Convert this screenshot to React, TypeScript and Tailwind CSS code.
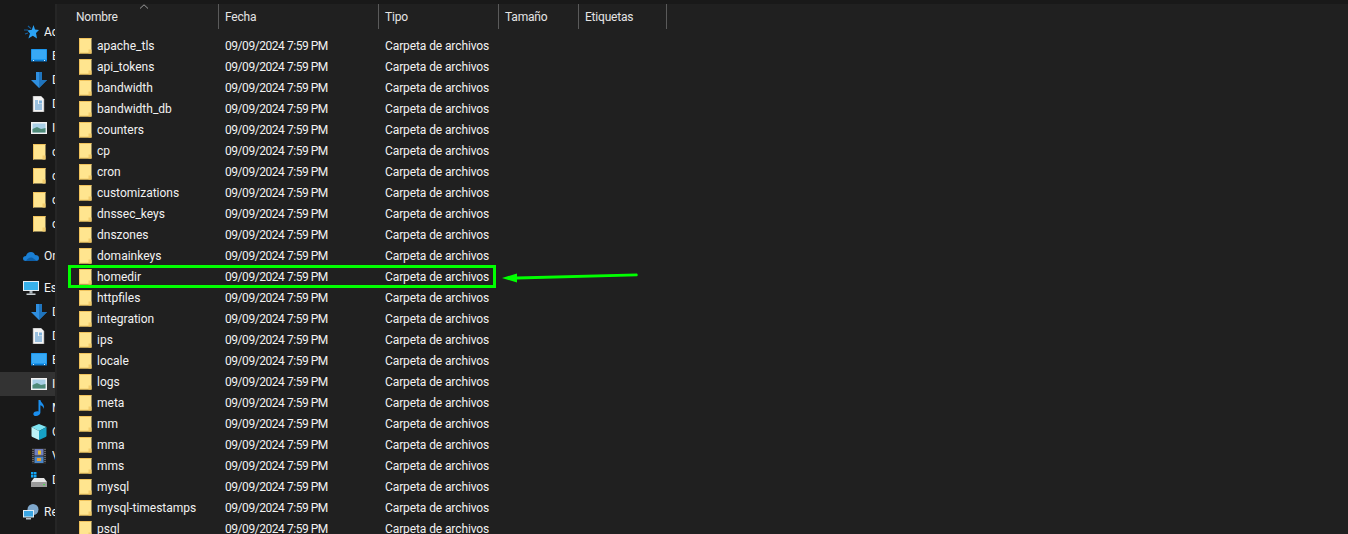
const folders = [
  "apache_tls", "api_tokens", "bandwidth", "bandwidth_db", "counters", "cp", "cron", "customizations",
  "dnssec_keys", "dnszones", "domainkeys", "homedir", "httpfiles", "integration", "ips", "locale",
  "logs", "meta", "mm", "mma", "mms", "mysql", "mysql-timestamps", "psql",
];

function FolderIcon() {
  return (
    <svg width="13" height="16" viewBox="0 0 13 16" className="shrink-0">
      <rect x="0" y="0" width="12.5" height="15.5" rx="0.5" fill="#ffe58f" />
      <path d="M0 15.5 L0 0.5 Q0 0 .5 0 L12 0 Q12.5 0 12.5 .5 L12.5 1 L1 1 L1 15.5 Z" fill="#f0c25c" />
      <path d="M9.5 15.5 V11.5 H12.5 V15.5 Z" fill="#f3cd6e" />
      <path d="M0 14.7 H12.5 V15.5 H0 Z" fill="#e6b850" />
    </svg>
  );
}

function StarIcon() {
  return (
    <svg width="16" height="16" viewBox="0 0 16 16">
      <path d="M10.5 1 L12 5.6 L16 6 L13 9 L14 14.5 L9.8 11.8 L5.4 14.5 L7 9.6 L4.4 6.6 L8.8 5.8 Z" fill="#2ba3f5" />
      <path d="M5 2 L8 4.6 M1 6 H5 M2 10 L5 9" stroke="#15609f" strokeWidth="1.2" />
    </svg>
  );
}

function DesktopIcon() {
  return (
    <svg width="16" height="16" viewBox="0 0 16 16">
      <rect x="0" y="1" width="16" height="12" rx="0.5" fill="#1c97ee" />
      <path d="M1 2 H15 V11 H1 Z" fill="#38a9f5" />
      <rect x="0" y="12" width="16" height="1.5" fill="#0c78cc" />
      <path d="M2 12.5 H3 M13 12.5 H14" stroke="#e8f6ff" strokeWidth="1" />
    </svg>
  );
}

function DownloadIcon() {
  return (
    <svg width="16" height="16" viewBox="0 0 16 16">
      <path d="M5 0 H11 V8 H16 L8 16 L0 8 H5 Z" fill="#2f8fe0" />
      <path d="M8 0 H11 V8 H16 L8 16 Z" fill="#1f74bd" />
    </svg>
  );
}

function DocIcon() {
  return (
    <svg width="16" height="16" viewBox="0 0 16 16">
      <path d="M2 0 H10 L13 3 V16 H2 Z" fill="#f4f4f4" stroke="#8a8a8a" strokeWidth="0.6" />
      <path d="M4 5 H7 M4 7 H7 M4 9 H11 M4 11 H11 M4 13 H11" stroke="#2a7fc4" strokeWidth="0.9" />
      <path d="M8 4.5 H11 V7.5 H8 Z" fill="#7fb3dc" />
    </svg>
  );
}

function PictureIcon() {
  return (
    <svg width="16" height="16" viewBox="0 0 16 16">
      <rect x="0" y="2" width="16" height="12" fill="#f2f2f2" />
      <rect x="1.5" y="3.5" width="13" height="9" fill="#a9cfe6" />
      <path d="M1.5 12.5 V9 L6 7 L10 9 L14.5 8 V12.5 Z" fill="#4f8a78" />
    </svg>
  );
}

function SmallFolderIcon() {
  return (
    <svg width="13" height="16" viewBox="0 0 13 16">
      <rect x="0" y="0" width="12.5" height="15.5" fill="#ffe58f" />
      <path d="M0 15.5 V0 H12.5 V1 H1 V15.5 Z" fill="#f0c25c" />
      <path d="M9.5 15.5 V11.5 H12.5 V15.5 Z" fill="#f3cd6e" />
    </svg>
  );
}

function CloudIcon() {
  return (
    <svg width="16" height="16" viewBox="0 0 16 16">
      <path d="M3 13 Q0 13 0 10.5 Q0 8 3 8 Q4 4 8 4 Q11 4 12 7 Q16 7 16 10 Q16 13 13 13 Z" fill="#1a7fd4" />
      <path d="M3 13 Q5 9 9 9.5 L14 13 Z" fill="#0e5fa8" />
    </svg>
  );
}

function ComputerIcon() {
  return (
    <svg width="16" height="16" viewBox="0 0 16 16">
      <rect x="0" y="1" width="16" height="10" fill="#e8eef2" />
      <rect x="1" y="2" width="14" height="8" fill="#37b0ea" />
      <rect x="6.5" y="11" width="3" height="2.5" fill="#a8b2b8" />
      <rect x="3.5" y="13.5" width="9" height="1.5" fill="#c8d0d4" />
    </svg>
  );
}

function MusicIcon() {
  return (
    <svg width="16" height="16" viewBox="0 0 16 16">
      <path d="M7.5 0 H9.4 C9.8 3 14 4 13 9 C12.4 6.6 11 5.6 9.4 5.2 V12.6 C9.4 14.8 7 16 5 16 C3 16 2 14.8 2.4 13.4 C2.9 11.8 5.4 10.8 7.5 11.4 Z" fill="#1b8fee" />
    </svg>
  );
}

function CubeIcon() {
  return (
    <svg width="16" height="16" viewBox="0 0 16 16">
      <path d="M8 0 L15.5 3 L8 7 L0.5 3 Z" fill="#7fe4f2" />
      <path d="M0.5 3 L8 7 V16 L1.4 13 Q.5 12.6 .5 11.8 Z" fill="#bdf3f8" />
      <path d="M15.5 3 L8 7 V16 L14.6 13 Q15.5 12.6 15.5 11.8 Z" fill="#17a2c6" />
    </svg>
  );
}

function VideoIcon() {
  return (
    <svg width="16" height="16" viewBox="0 0 16 16">
      <rect x="1" y="0" width="14" height="16" fill="#2a2a2a" />
      <rect x="3.5" y="1" width="9" height="6.5" fill="#6f7fc0" />
      <rect x="3.5" y="8.5" width="9" height="6.5" fill="#4a86c8" />
      <rect x="7" y="2.5" width="3" height="4" fill="#e8c030" />
      <rect x="6" y="10" width="4" height="3" fill="#e8a030" />
      <path d="M2 1 V15 M14 1 V15" stroke="#9a9a9a" strokeWidth="1" strokeDasharray="1 1" />
    </svg>
  );
}

function DriveIcon() {
  return (
    <svg width="16" height="16" viewBox="0 0 16 16">
      <path d="M0 0 H2.5 V2.5 H0 Z M3 0 H5.5 V2.5 H3 Z M0 3 H2.5 V5.5 H0 Z M3 3 H5.5 V5.5 H3 Z" fill="#12a5f4" />
      <path d="M3 6 H13 L16 10 H0 Z" fill="#e6e6e6" />
      <rect x="0" y="10" width="16" height="5" fill="#9a9a9a" />
      <rect x="12" y="12" width="2" height="1.2" fill="#4fd04f" />
    </svg>
  );
}

function NetworkIcon() {
  return (
    <svg width="16" height="16" viewBox="0 0 16 16">
      <circle cx="10" cy="5.5" r="5.5" fill="#7fa8cc" />
      <rect x="0" y="6" width="11" height="7.5" fill="#e0ecf4" />
      <rect x="1" y="7" width="9" height="5.5" fill="#3ba6e4" />
      <rect x="3" y="14" width="5" height="1.5" fill="#b8c4cc" />
    </svg>
  );
}

function NavRow({ icon, label, sub, selected }: { icon: React.ReactNode; label: string; sub?: boolean; selected?: boolean }) {
  return (
    <div className={`flex h-6 items-center gap-[5px] whitespace-nowrap ${sub ? "pl-[31px]" : "pl-[23px]"} ${selected ? "bg-[#333333]" : ""}`}>
      <span className="flex w-4 shrink-0 justify-center">{icon}</span>
      <span className="min-w-0 overflow-hidden">{label}</span>
    </div>
  );
}

function HeaderCell({ label, width }: { label: string; width: string }) {
  return (
    <div className={`flex h-[25px] shrink-0 items-center border-r border-[#5a5a5a] pl-[6px] tracking-[-0.2px] ${width}`}>
      {label}
    </div>
  );
}

export default function App() {
  return (
    <div className="relative flex h-[534px] w-[1348px] overflow-hidden bg-[#191919] text-[12px] text-[#f2f2f2] [font-family:Roboto,sans-serif]">
      <aside className="w-[55px] shrink-0 overflow-hidden pt-5">
        <div className="flex flex-col gap-2">
          <div>
            <NavRow icon={<StarIcon />} label="Acceso rápido" />
            <NavRow sub icon={<DesktopIcon />} label="Escritorio" />
            <NavRow sub icon={<DownloadIcon />} label="Descargas" />
            <NavRow sub icon={<DocIcon />} label="Documentos" />
            <NavRow sub icon={<PictureIcon />} label="Imágenes" />
            <NavRow sub icon={<SmallFolderIcon />} label="cpanel" />
            <NavRow sub icon={<SmallFolderIcon />} label="cuentas" />
            <NavRow sub icon={<SmallFolderIcon />} label="copias" />
            <NavRow sub icon={<SmallFolderIcon />} label="cron" />
          </div>
          <NavRow icon={<CloudIcon />} label="OneDrive" />
          <div>
            <NavRow icon={<ComputerIcon />} label="Este equipo" />
            <NavRow sub icon={<DownloadIcon />} label="Descargas" />
            <NavRow sub icon={<DocIcon />} label="Documentos" />
            <NavRow sub icon={<DesktopIcon />} label="Escritorio" />
            <NavRow sub selected icon={<PictureIcon />} label="Imágenes" />
            <NavRow sub icon={<MusicIcon />} label="Música" />
            <NavRow sub icon={<CubeIcon />} label="Objetos 3D" />
            <NavRow sub icon={<VideoIcon />} label="Vídeos" />
            <NavRow sub icon={<DriveIcon />} label="Disco local" />
          </div>
          <NavRow icon={<NetworkIcon />} label="Red" />
        </div>
      </aside>

      <main className="mt-1 flex-1 border-l-2 border-[#262626] bg-[#202020]">
        <div className="relative flex h-[31px] items-start pl-[13px] text-[#e4e4e4]">
          <HeaderCell label="Nombre" width="w-[149px]" />
          <HeaderCell label="Fecha" width="w-[160px]" />
          <HeaderCell label="Tipo" width="w-[120px]" />
          <HeaderCell label="Tamaño" width="w-[80px]" />
          <HeaderCell label="Etiquetas" width="w-[88px]" />
          <svg width="10" height="5" viewBox="0 0 10 5" className="absolute left-[82px] top-0">
            <path d="M1 4.5 L5 .8 L9 4.5" fill="none" stroke="#9a9a9a" strokeWidth="1" />
          </svg>
        </div>
        {folders.map((name) => (
          <div key={name} className="relative flex h-[21px] items-center whitespace-nowrap">
            <div className="flex w-[168px] shrink-0 items-center gap-[5px] pl-[22px]">
              <FolderIcon />
              <span>{name}</span>
            </div>
            <div className="w-[160px] shrink-0 tracking-[-0.45px]">09/09/2024 7:59 PM</div>
            <div className="tracking-[-0.1px]">Carpeta de archivos</div>
            {name === "homedir" && (
              <>
                <div className="absolute left-[11px] top-[-1px] h-[23px] w-[428px] border-[3px] border-[#00ff00]" />
                <svg width="140" height="14" viewBox="0 0 140 14" className="absolute left-[445px] top-[4px]">
                  <path d="M0 8 L15 3.5 L15 6.6 L135 3.6 Q136.5 5 135 6.2 L15 9.6 L15 12.5 Z" fill="#00ff00" />
                </svg>
              </>
            )}
          </div>
        ))}
      </main>
    </div>
  );
}
